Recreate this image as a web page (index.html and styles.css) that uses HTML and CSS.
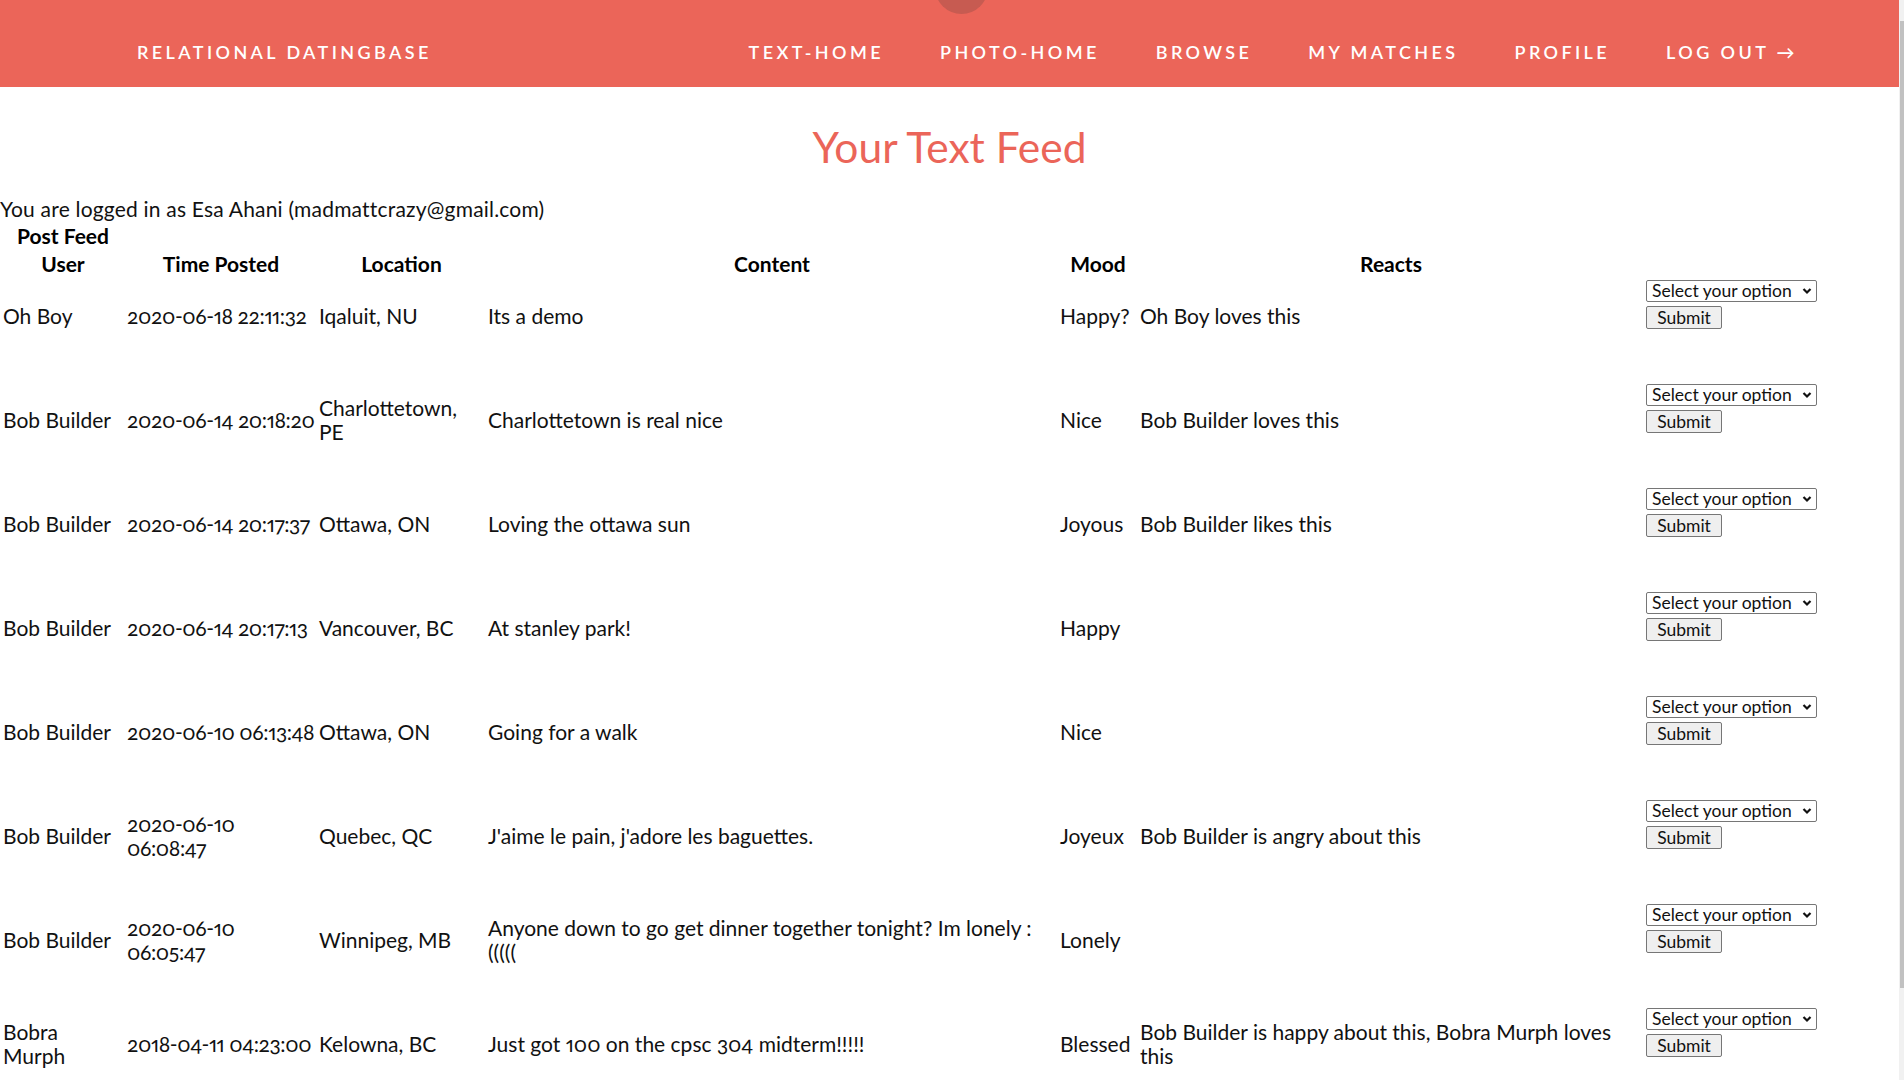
FILE: index.html
```html
<!DOCTYPE html>
<html lang="en">
<head>
<meta charset="utf-8">
<title>Your Text Feed</title>
<link rel="stylesheet" href="styles.css">
</head>
<body>
<div class="scrollbar"><div class="scrollbar-thumb"></div></div>
<header class="topbar">
  <span class="knob"></span>
  <a class="brand" href="#">RELATIONAL DATINGBASE</a>
  <nav class="nav">
    <a href="#">TEXT-HOME</a>
    <a href="#">PHOTO-HOME</a>
    <a href="#">BROWSE</a>
    <a href="#">MY MATCHES</a>
    <a href="#">PROFILE</a>
    <a href="#">LOG OUT &rarr;</a>
  </nav>
</header>
<main>
  <h1 class="page-title">Your Text Feed</h1>
  <p class="login-note">You are logged in as Esa Ahani (madmattcrazy@gmail.com)</p>
  <table class="feed">
    <colgroup>
      <col class="c-user"><col class="c-time"><col class="c-loc"><col class="c-content"><col class="c-mood"><col class="c-reacts"><col class="c-form">
    </colgroup>
    <tr><th>Post Feed</th></tr>
    <tr><th>User</th><th>Time Posted</th><th>Location</th><th>Content</th><th>Mood</th><th>Reacts</th><th></th></tr>
    <tr class="post">
      <td>Oh Boy</td><td class="time">2020-06-18 22:11:32</td><td>Iqaluit, NU</td><td>Its a demo</td><td>Happy?</td><td>Oh Boy loves this</td>
      <td><form class="react"><span class="select-wrap"><select><option>Select your option</option></select><svg viewBox="0 0 10 10"><path d="M1.5 3 L5 6.5 L8.5 3"/></svg></span><button type="button">Submit</button></form></td>
    </tr>
    <tr class="post">
      <td>Bob Builder</td><td class="time">2020-06-14 20:18:20</td><td>Charlottetown,<br>PE</td><td>Charlottetown is real nice</td><td>Nice</td><td>Bob Builder loves this</td>
      <td><form class="react"><span class="select-wrap"><select><option>Select your option</option></select><svg viewBox="0 0 10 10"><path d="M1.5 3 L5 6.5 L8.5 3"/></svg></span><button type="button">Submit</button></form></td>
    </tr>
    <tr class="post">
      <td>Bob Builder</td><td class="time">2020-06-14 20:17:37</td><td>Ottawa, ON</td><td>Loving the ottawa sun</td><td>Joyous</td><td>Bob Builder likes this</td>
      <td><form class="react"><span class="select-wrap"><select><option>Select your option</option></select><svg viewBox="0 0 10 10"><path d="M1.5 3 L5 6.5 L8.5 3"/></svg></span><button type="button">Submit</button></form></td>
    </tr>
    <tr class="post">
      <td>Bob Builder</td><td class="time">2020-06-14 20:17:13</td><td>Vancouver, BC</td><td>At stanley park!</td><td>Happy</td><td></td>
      <td><form class="react"><span class="select-wrap"><select><option>Select your option</option></select><svg viewBox="0 0 10 10"><path d="M1.5 3 L5 6.5 L8.5 3"/></svg></span><button type="button">Submit</button></form></td>
    </tr>
    <tr class="post">
      <td>Bob Builder</td><td class="time">2020-06-10 06:13:48</td><td>Ottawa, ON</td><td>Going for a walk</td><td>Nice</td><td></td>
      <td><form class="react"><span class="select-wrap"><select><option>Select your option</option></select><svg viewBox="0 0 10 10"><path d="M1.5 3 L5 6.5 L8.5 3"/></svg></span><button type="button">Submit</button></form></td>
    </tr>
    <tr class="post">
      <td>Bob Builder</td><td class="time">2020-06-10<br>06:08:47</td><td>Quebec, QC</td><td>J'aime le pain, j'adore les baguettes.</td><td>Joyeux</td><td>Bob Builder is angry about this</td>
      <td><form class="react"><span class="select-wrap"><select><option>Select your option</option></select><svg viewBox="0 0 10 10"><path d="M1.5 3 L5 6.5 L8.5 3"/></svg></span><button type="button">Submit</button></form></td>
    </tr>
    <tr class="post">
      <td>Bob Builder</td><td class="time">2020-06-10<br>06:05:47</td><td>Winnipeg, MB</td><td>Anyone down to go get dinner together tonight? Im lonely : (((((</td><td>Lonely</td><td></td>
      <td><form class="react"><span class="select-wrap"><select><option>Select your option</option></select><svg viewBox="0 0 10 10"><path d="M1.5 3 L5 6.5 L8.5 3"/></svg></span><button type="button">Submit</button></form></td>
    </tr>
    <tr class="post">
      <td>Bobra<br>Murph</td><td class="time">2018-04-11 04:23:00</td><td>Kelowna, BC</td><td>Just got 100 on the cpsc 304 midterm!!!!!</td><td>Blessed</td><td>Bob Builder is happy about this, Bobra Murph loves this</td>
      <td><form class="react"><span class="select-wrap"><select><option>Select your option</option></select><svg viewBox="0 0 10 10"><path d="M1.5 3 L5 6.5 L8.5 3"/></svg></span><button type="button">Submit</button></form></td>
    </tr>
  </table>
</main>
</body>
</html>
```
FILE: styles.css
```css
body {
  margin: 0 5px 0 0;
  font-family: "Lato", "Open Sans", sans-serif;
  font-size: 21px;
  line-height: 24px;
  font-variant-numeric: oldstyle-nums proportional-nums;
  color: #111;
  background: #fff;
  padding-bottom: 95px;
}

/* browser scrollbar, drawn over the right edge */
.scrollbar {
  position: fixed;
  top: 0;
  right: 0;
  width: 5px;
  height: 100vh;
  background: #f1f1f1;
  z-index: 10;
}
.scrollbar-thumb {
  margin: 21px 0 0 1px;
  height: 967px;
  background: #c1c1c1;
}

.topbar {
  position: relative;
  height: 87px;
  box-sizing: border-box;
  padding: 16px 101px 0 137px;
  background: #eb6559;
  display: flex;
  align-items: center;
  justify-content: space-between;
  overflow: hidden;
}
.knob {
  position: absolute;
  left: 935px;
  top: -39px;
  width: 53px;
  height: 53px;
  border-radius: 50%;
  background: #c75b51;
}
.brand, .nav a {
  color: #fff;
  text-decoration: none;
  font-family: "Lato", sans-serif;
  font-weight: 600;
  font-size: 18px;
  letter-spacing: 3.4px;
  line-height: 20px;
}
.nav {
  display: flex;
  gap: 56px;
}

.page-title {
  margin: 36px 0 26px;
  text-align: center;
  font-weight: 400;
  font-size: 42.5px;
  line-height: 48px;
  color: #eb6559;
}

.login-note {
  margin: 0;
  letter-spacing: 0.2px;
}

.feed {
  table-layout: fixed;
  width: 1822px;
  border-collapse: separate;
  border-spacing: 2px;
}
.c-user { width: 122px; }
.c-time { width: 190px; }
.c-loc { width: 167px; }
.c-content { width: 570px; }
.c-mood { width: 78px; }
.c-reacts { width: 504px; }
.c-form { width: 175px; }

.feed th {
  padding: 1px;
  font-weight: 700;
  text-align: center;
  color: #000;
}
.feed td {
  padding: 1px;
  vertical-align: middle;
  text-align: left;
}
.feed td.time {
  letter-spacing: -0.4px;
}
.post td {
  border-bottom: 28px solid transparent;
}

.react {
  margin: 0 0 23px;
  display: flex;
  flex-direction: column;
  align-items: flex-start;
  gap: 4px;
}
.select-wrap {
  position: relative;
  display: block;
  height: 22px;
}
.react select {
  display: block;
  appearance: none;
  -webkit-appearance: none;
  width: 171px;
  height: 22px;
  box-sizing: border-box;
  margin: 0;
  padding: 0 0 0 5px;
  border: 1px solid #767676;
  border-radius: 2px;
  background: #fff;
  color: #111;
  font-family: "Lato", sans-serif;
  font-size: 17.5px;
  line-height: 20px;
}
.select-wrap svg {
  position: absolute;
  right: 5px;
  top: 6px;
  width: 10px;
  height: 10px;
  fill: none;
  stroke: #111;
  stroke-width: 2.2;
  pointer-events: none;
}
.react button {
  display: block;
  width: 76px;
  height: 23px;
  box-sizing: border-box;
  margin: 0;
  padding: 0;
  border: 1px solid #767676;
  border-radius: 2px;
  background: #efefef;
  color: #111;
  font-family: "Lato", sans-serif;
  font-size: 17.5px;
  line-height: 20px;
}
```
